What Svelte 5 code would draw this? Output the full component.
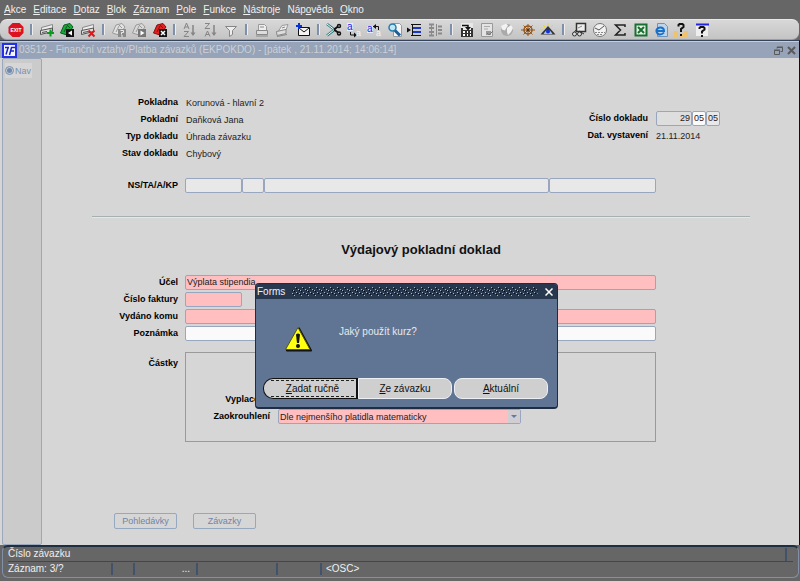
<script>
  const menu = [
    ['', 'A', 'kce'],
    ['', 'E', 'ditace'],
    ['', 'D', 'otaz'],
    ['', 'B', 'lok'],
    ['', 'Z', 'áznam'],
    ['', 'P', 'ole'],
    ['', 'F', 'unkce'],
    ['', 'N', 'ástroje'],
    ['Náp', 'o', 'věda'],
    ['', 'O', 'kno']
  ];

  const card = (c) =>
    `<path d="M2.500 5.500L13.500 2.500V6.500L2.500 9.500Z" fill="#eee" stroke="#888"/><path d="M1.500 8.500L13.500 6V9.500L1.500 12.500Z" fill="#ddd" stroke="${c}"/><path d="M3 10.500L8 9.500" stroke="#555"/>`;
  const query = (fill, edge, glyph, box) =>
    `<path d="M1.500 11L5 3L11 1.500L14 5L8 13Z" fill="${fill}" stroke="${edge}"/><path d="M5 10L8 4M8 3L11 6" stroke="${edge}" fill="none"/><path d="M7 7h8v8h-8z" fill="${box}"/>${glyph}`;

  const toolbar = [
    [['Konec', '<path d="M4.500 1h7l4 4v6l-4 4h-7l-4-4v-6z" fill="#dc1220"/><text x="8" y="10" text-anchor="middle" font-size="5" font-weight="bold" font-family="Liberation Sans, sans-serif" fill="#fff">EXIT</text>']],
    [
      ['Vložit záznam', card('#555') + '<path d="M8 11h7M11.500 7.500v7" stroke="#0a9a1e" stroke-width="2"/>'],
      ['Uložit', query('#19a83a', '#0c5c20', '<path d="M13 8.500v5l-4-2.500z" fill="#fff"/>', '#111')],
      ['Smazat záznam', card('#555') + '<path d="M8.500 8.500l6 6M14.500 8.500l-6 6" stroke="#e01818" stroke-width="2"/>']
    ],
    [
      ['Zadat dotaz', query('#e2e2e2', '#999', '<path d="M9.500 8.500h3v2h-2v2M10 14h2" stroke="#eee" fill="none"/>', '#8b8b8b')],
      ['Provést dotaz', query('#d9d9d9', '#999', '<path d="M9.500 8.500v5l4-2.500z" fill="#fff"/>', '#777')],
      ['Zrušit dotaz', query('#e02222', '#8c0c0c', '<path d="M9 9l4 4M13 9l-4 4" stroke="#fff" stroke-width="1.500"/>', '#111')]
    ],
    [
      ['Řadit vzestupně', '<path d="M2 7L4.500 1L7 7M3 5h3M2 9.500h4.500L2 14.500h5" stroke="#858585" fill="none"/><path d="M11 3v10" stroke="#858585" stroke-width="1.500"/><path d="M8.500 10.500h5L11 14z" fill="#858585"/>'],
      ['Řadit sestupně', '<path d="M2 1.500h4.500L2 6.500h5M2 14.500L4.500 9L7 14.500M3 12.500h3" stroke="#858585" fill="none"/><path d="M11 3v10" stroke="#858585" stroke-width="1.500"/><path d="M8.500 10.500h5L11 14z" fill="#858585"/>'],
      ['Filtr', '<path d="M2.500 4.500h11l-4 4v4l-3 2v-6z" fill="#eee" stroke="#858585"/>']
    ],
    [
      ['Tisk', '<path d="M4.500 8V2.500h6l2 2V8" fill="#eee" stroke="#999"/><path d="M2.500 8.500h11v4h-11z" fill="#ddd" stroke="#888"/><path d="M2 14h12M6 5h4" stroke="#888"/>'],
      ['Náhled tisku', '<path d="M4.500 9L8 3.500L14 2.500L12 8" fill="#eee" stroke="#999"/><path d="M2.500 9.500L12 7.500v4L3 13.500z" fill="#ddd" stroke="#888"/><path d="M3 14.500l10-2M8 6l3-1" stroke="#888"/>'],
      ['Odeslat poštou', '<path d="M3.500 5.500h11v8h-11z" fill="#f5f5f5" stroke="#111"/><path d="M4 6l5 4L14 6" fill="none" stroke="#111"/><path d="M1 4h6M4 1v6" stroke="#0a32d8" stroke-width="2"/>']
    ],
    [
      ['Vyjmout', '<path d="M1 2l8 6M1 13.500L9 7.500" stroke="#287c80" stroke-width="2.500"/><path d="M1 2l7 5.500M1 13.500L8 8" stroke="#e8ffff"/><path d="M8 7.500L14 3M8 7.500l6 4.500" stroke="#111" stroke-width="2"/><circle cx="13" cy="4" r="1.500" fill="#ccc" stroke="#111" stroke-width="1.500"/><circle cx="13" cy="11.500" r="1.500" fill="#ccc" stroke="#111" stroke-width="1.500"/>'],
      ['Kopírovat', '<path d="M1 1h6v8h-6z" fill="#e8ecff"/><text x="1" y="8" font-size="10" font-family="Liberation Sans, sans-serif" fill="#1428e0">a</text><path d="M4.500 10v3h4" stroke="#111" fill="none"/><path d="M8 10.500l3 2.500l-3 2.500z" fill="#111"/><text x="10" y="14" font-size="9" font-family="Liberation Sans, sans-serif" fill="#f4f4f4">a</text>'],
      ['Vložit', '<path d="M1 4h6v7h-6z" fill="#e8ecff"/><text x="1" y="10" font-size="10" font-family="Liberation Sans, sans-serif" fill="#1428e0">a</text><path d="M7 4.500h5.500V8" stroke="#111" fill="none"/><path d="M10 2L7 4.500L10 7z" fill="#111"/><text x="10" y="14" font-size="9" font-family="Liberation Sans, sans-serif" fill="#f4f4f4">a</text>'],
      ['Hledat', '<path d="M6.500 1.500h6l2 2v11h-8z" fill="#f5f5f5" stroke="#999"/><circle cx="5.500" cy="5.500" r="3.500" fill="#bfe6f5" stroke="#277ba8" stroke-width="1.500"/><path d="M8 8.500l5 5" stroke="#1c5e99" stroke-width="3"/>'],
      ['Seznam hodnot', '<path d="M4 2.500h10M4 13.500h10" stroke="#111"/><path d="M6 6h8M6 10h8" stroke="#1836c8" stroke-width="2"/><path d="M0 5.500v5l4-2.500z" fill="#111"/><path d="M5.500 2v12" stroke="#111"/>'],
      ['Strom', '<path d="M1 2.500h5M1 6h5M1 10h5M1 13.500h5M10 4.500h4M10 8h4M10 11.500h4" stroke="#8a8a8a" stroke-width="2"/><path d="M3.500 2v12M8.500 2v12" stroke="#8a8a8a"/>']
    ],
    [
      ['Kalendář', '<path d="M2 1h12v14h-12z" fill="#e8e8e8"/><path d="M2 6h2v2h8V6h2v9h-12z" fill="#333"/><path d="M4 10h2M8 10h1M11 10h1M4 13h2M8 13h1M11 13h1" stroke="#fff" stroke-width="2"/><path d="M3 3.500h6V6" stroke="#111" stroke-width="1.500" fill="none"/><path d="M6 5h6L9 8.500z" fill="#111"/>'],
      ['Dokument', '<path d="M2.500 1.500h11v13h-11z" fill="#e4e4e4" stroke="#999"/><path d="M5 4.500h6M5 7h4" stroke="#aaa"/><path d="M7 9h5v4h-5z" fill="#999"/><path d="M8 11l2 2l4-4" stroke="#777" fill="none"/>'],
      ['Internet', '<circle cx="8" cy="8" r="6" fill="#aaa"/><path d="M2 4l5-2.500l2 2l-2 3l-1 2l-3-1zM8 6l4-3l2 3l-2 4l-3 3l-1-3z" fill="#f2f2f2"/>'],
      ['Nastavení', '<circle cx="8" cy="8" r="4" fill="none" stroke="#96561a" stroke-width="1.500"/><path d="M8 2v12M1 8h14M3.500 3.500l9 9M12.500 3.500L3.500 12.500" stroke="#96561a"/><circle cx="8" cy="8" r="1.500" fill="#5c3008"/>'],
      ['Pohled', '<path d="M8 1v3M3 3l2 2M13 3l-2 2M0.500 8l2-1M15.500 8l-2-1" stroke="#e8d820"/><path d="M0.500 12.500L8 4L15.500 12.500z" fill="#333"/><path d="M3.500 12Q8 4 12.500 12z" fill="#9fc4f8"/><circle cx="8" cy="9.500" r="2" fill="#1430d8"/>']
    ],
    [
      ['Tabule', '<path d="M5.500 1.500h9v8h-9z" fill="#eee" stroke="#333" stroke-width="1.500"/><path d="M5 8L2 12M8 9l5 3" stroke="#333"/><circle cx="3.500" cy="12" r="2" fill="#ddd" stroke="#333"/><circle cx="8.500" cy="12" r="2" fill="#ddd" stroke="#333"/><path d="M7 6l4-2" stroke="#888"/>'],
      ['Hodiny', '<circle cx="8" cy="8" r="6.500" fill="#f2f2f2" stroke="#777"/><path d="M3 6l4 2l5-4" stroke="#555" fill="none"/><path d="M3 10.500h10M5 12.500h6" stroke="#888" stroke-dasharray="2 1"/>'],
      ['Součet', '<path d="M13 5V3H3.500L8.500 8L3.500 13H13V11" stroke="#222" stroke-width="1.500" fill="none"/>'],
      ['Excel', '<path d="M2.500 2.500h11v11h-11z" fill="#e8f2e8" stroke="#187030" stroke-width="2"/><path d="M5 5l6 6M11 5l-6 6" stroke="#187030" stroke-width="2"/>'],
      ['Prohlížeč', '<path d="M4.500 1.500h7l3 3v10h-10z" fill="#bed4ea" stroke="#6d93ba"/><path d="M11 10.500Q9 13 6 12.500Q3 11 3.500 8Q5 5 8 5.500Q11 6 11 9H4" stroke="#1870c8" stroke-width="2" fill="none"/>'],
      ['Kontakt', '<path d="M1 9h4v6h-4zM11 9h4v6h-4zM6 12h4v3h-4z" fill="#efc271"/><path d="M5.500 4.500V3l1-1h3l1 1v2L8 7v3M8 12v2" stroke="#111" stroke-width="2" fill="none"/>'],
      ['Nápověda', '<path d="M2 2h12v12h-12z" fill="#eee"/><path d="M2 2.500h13" stroke="#2424e0" stroke-width="2"/><path d="M5.500 7V6l1-1h3l1 1v1.500L8 9.500v2M8 13v2" stroke="#111" stroke-width="2" fill="none"/>']
    ]
  ];

  const header = [
    ['Pokladna', 'Korunová - hlavní 2'],
    ['Pokladní', 'Daňková Jana'],
    ['Typ dokladu', 'Úhrada závazku'],
    ['Stav dokladu', 'Chybový']
  ];
</script>

<div class="app">
  <nav class="menu">
    {#each menu as [before, key, after]}
      <a href="#menu">{before}<u>{key}</u>{after}</a>
    {/each}
  </nav>

  <div class="toolbar">
    <div class="tools">
      {#each toolbar as group, i}
        {#if i > 0}<span class="sep"></span>{/if}
        {#each group as [name, shape]}
          <button class="tool" aria-label={name}>
            <svg width="16" height="16" viewBox="0 0 16 16" fill="none">{@html shape}</svg>
          </button>
        {/each}
      {/each}
    </div>
  </div>

  <div class="window">
    <header class="titlebar">
      <svg class="logo" width="15" height="15" viewBox="0 0 15 15">
        <path d="M1 1h13v13H1z" fill="#f4f6ff" stroke="#2430e8" stroke-width="2" />
        <path d="M3 4.500h4M6 5L4 11.500M7.500 12L9.500 4.500H13M8.500 8h3.500" stroke="#1822c0" stroke-width="1.500" fill="none" />
      </svg>
      <span class="caption">03512 - Finanční vztahy/Platba závazků (EKPOKDO) - [pátek , 21.11.2014; 14:06:14]</span>
      <button class="win" aria-label="Obnovit">
        <svg width="9" height="9" viewBox="0 0 9 9" fill="none" stroke="#5a5a5a"><path d="M3 2.500V1.500h5.500v4H6.500M3 1h6" /><path d="M0.500 4.500h5v4h-5zM0 4h6" /></svg>
      </button>
      <button class="win" aria-label="Zavřít okno">
        <svg width="9" height="9" viewBox="0 0 9 9" stroke="#5a5a5a" stroke-width="2"><path d="M1 1l7 7M8 1L1 8" /></svg>
      </button>
    </header>

    <div class="body">
      <aside class="side">
        <button class="nav">
          <svg width="9" height="9" viewBox="0 0 9 9"><circle cx="4.500" cy="4.500" r="4" fill="#c3cad6" stroke="#7c90ae" /><circle cx="4.500" cy="4.500" r="2.500" fill="#7288a8" /></svg>
          Nav
        </button>
      </aside>

      <main class="form">
        <section class="head">
          <dl class="info">
            {#each header as [term, value]}
              <div class="line"><dt>{term}</dt><dd>{value}</dd></div>
            {/each}
          </dl>
          <div class="doc">
            <div class="line">
              <label for="number">Číslo dokladu</label>
              <div class="parts">
                <input id="number" class="grey num" value="29" />
                <input class="white two" aria-label="Řada" value="05" />
                <input class="grey two" aria-label="Rok" value="05" />
              </div>
            </div>
            <div class="line"><span class="label">Dat. vystavení</span><span class="date">21.11.2014</span></div>
          </div>
        </section>

        <div class="row codes">
          <label for="ns">NS/TA/A/KP</label>
          <div class="parts">
            <input id="ns" class="grey ns" />
            <input class="grey ta" aria-label="TA" />
            <input class="grey a" aria-label="A" />
            <input class="grey kp" aria-label="KP" />
          </div>
        </div>

        <hr />
        <h1>Výdajový pokladní doklad</h1>

        <section class="fields">
          <div class="row"><label for="purpose">Účel</label><input id="purpose" class="pink" value="Výplata stipendia" /></div>
          <div class="row"><label for="invoice">Číslo faktury</label><input id="invoice" class="pink short" /></div>
          <div class="row"><label for="payee">Vydáno komu</label><input id="payee" class="pink" /></div>
          <div class="row"><label for="note">Poznámka</label><input id="note" class="white" /></div>
        </section>

        <section class="row amounts">
          <span class="label">Částky</span>
          <div class="frame">
            <div class="sub"><label for="paid">Vyplaceno</label><input id="paid" class="pink paid" /></div>
            <div class="sub">
              <label for="round">Zaokrouhlení</label>
              <div class="pick">
                <select id="round" class="pink"><option>Dle nejmenšího platidla matematicky</option></select>
                <svg class="arrow" width="12" height="13" viewBox="0 0 12 13"><path d="M0 0h12v13H0z" fill="#d0ced2" /><path d="M3 5h6l-3 3z" fill="#5f7ba0" /></svg>
              </div>
            </div>
          </div>
        </section>

        <div class="actions">
          <button>Pohledávky</button>
          <button>Závazky</button>
        </div>
      </main>
    </div>
  </div>

  <footer class="status">
    <div class="message"><span>Číslo závazku</span></div>
    <div class="cells">
      <span class="c1">Záznam: 3/?</span><span class="c2"></span><span class="c3">...</span><span class="c4"></span><span class="c5"></span><span class="c6">&lt;OSC&gt;</span>
    </div>
  </footer>

  <div class="dialog" role="alertdialog" aria-labelledby="dlg-title" aria-describedby="dlg-text">
    <div class="dlg-bar">
      <span id="dlg-title">Forms</span>
      <svg class="grip" height="9" aria-hidden="true">
        <defs>
          <pattern id="grip" width="7" height="9" patternUnits="userSpaceOnUse">
            <path d="M3 0h1v1h-1zM6 2h1v1h-1zM1 3h1v1h-1zM4 5h1v1h-1zM0 6h1v1h-1zM2 8h1v1h-1z" fill="#a9b6c8" />
            <path d="M4 1h1v1h-1zM0 3h1v1h-1zM2 4h1v1h-1zM5 6h1v1h-1zM1 7h1v1h-1z" fill="#050b14" />
          </pattern>
        </defs>
        <rect width="100%" height="9" fill="url(#grip)" />
      </svg>
      <button class="close" aria-label="Zavřít">
        <svg width="8" height="8" viewBox="0 0 8 8" stroke="#fff" stroke-width="1.500"><path d="M0.500 0.500l7 7M7.500 0.500l-7 7" /></svg>
      </button>
    </div>
    <div class="dlg-body">
      <svg width="30" height="27" viewBox="0 0 30 27">
        <path d="M15 2.500L27 24.500H3z" fill="#111" stroke="#111" stroke-width="2" stroke-linejoin="round" />
        <path d="M14 1.500L26 23.500H1.500z" fill="#ffff10" stroke="#55550a" stroke-linejoin="round" />
        <path d="M12 8.500q2-2 4 0L15 17h-2z" fill="#111" />
        <circle cx="14" cy="20" r="2" fill="#111" />
      </svg>
      <p id="dlg-text">Jaký použít kurz?</p>
    </div>
    <div class="dlg-buttons">
      <button class="default"><span><u>Z</u>adat ručně</span></button>
      <button class="mid"><u>Z</u>e závazku</button>
      <button class="last"><u>A</u>ktuální</button>
    </div>
  </div>
</div>

<style>
  :global(body) { margin: 0; background: #666; }
  .app, .app * { box-sizing: border-box; }
  .app {
    position: relative;
    display: flex;
    flex-direction: column;
    min-height: 100vh;
    padding-bottom: 3px;
    background: #666;
    color: #111;
    font: 10px/12px "Liberation Sans", Arial, sans-serif;
  }
  button, input, select { font: inherit; color: inherit; margin: 0; padding: 0; border: 0; background: none; border-radius: 0; }
  svg { display: block; flex: none; }
  u { text-underline-offset: 1px; }

  .menu { display: flex; gap: 7px; height: 19px; padding: 4px 4px 0; }
  .menu a { color: #f0f0f0; text-decoration: none; }

  .toolbar {
    height: 21px;
    margin-right: 1px;
    padding-left: 6px;
    background: linear-gradient(#d8d8d8, #c4c4c4);
    border-top: 1px solid #e8e8e8;
    border-bottom: 1px solid #9aa0a8;
    border-radius: 7px;
  }
  .tools { display: flex; align-items: center; max-width: 706px; height: 19px; }
  .tool { flex: 2 1 0; min-width: 0; display: flex; justify-content: center; }
  .sep { flex: 1 1 0; display: flex; justify-content: center; }
  .sep::before { content: ""; width: 2px; height: 11px; background: #7f90aa; border-right: 1px solid #eee; }

  .window { flex: 1; display: flex; flex-direction: column; background: #d6d6d6; border-top: 1px solid #35445a; border-right: 1px solid #111; }
  .titlebar { display: flex; align-items: center; height: 17px; padding: 0 3px 0 2px; gap: 4px; background: #96a3b8; border-top: 1px solid #c8ced8; }
  .titlebar .logo { margin-right: -2px; }
  .caption { flex: 1; color: #ccd0d6; white-space: nowrap; }

  .body { flex: 1; display: flex; }
  .side { width: 40px; margin-left: 2px; padding: 4px 2px; background: #cbcbcb; border: 1px solid #9ba8bc; border-radius: 2px; }
  .nav { display: flex; align-items: center; gap: 1px; height: 15px; padding: 0 1px 0 0; background: #d6d6d6; color: #7d90ac; font-size: 9px; }

  .form { flex: 1; padding: 37px 49px 0 50px; font-size: 9px; line-height: 15px; }
  label, dt, .label { font-weight: bold; color: #000; text-align: right; white-space: nowrap; }
  .head { display: flex; justify-content: space-between; padding-right: 30px; }
  dl, dd { margin: 0; }
  .line { display: flex; gap: 8px; height: 17px; }
  dt { width: 86px; }
  dd, .date { padding-top: 1px; color: #222; white-space: nowrap; }
  .doc { padding-top: 16px; }
  .doc label, .doc .label { width: 68px; }
  .parts { display: flex; }
  input, select { height: 15px; min-width: 0; border: 1px solid #98a7bf; border-radius: 2px; padding: 0 1px; color: #222; }
  .grey { background: #e8e8e8; }
  .white { background: #fafafa; }
  .pink { background: #ffbec0; }
  .num { width: 36px; text-align: right; background: #dedede; }
  .two { width: 14px; }

  .row { display: grid; grid-template-columns: 86px 1fr; column-gap: 7px; margin-right: 94px; }
  .codes { margin-top: 15px; }
  .ns { width: 57px; }
  .ta { width: 22px; }
  .a { flex: 1; }
  .kp { width: 107px; }

  hr { height: 2px; margin: 23px 0 0; border: 0; background: #a6b0b2; border-bottom: 1px solid #e6e6e2; }
  h1 { margin: 24px 0 0; font-size: 13px; line-height: 16px; text-align: center; color: #111; }
  .fields { display: grid; row-gap: 2px; margin-top: 17px; }
  .short { width: 57px; }

  .amounts { margin-top: 11px; }
  .amounts > .label { padding-top: 4px; }
  .frame { display: grid; align-content: start; row-gap: 2px; height: 90px; padding: 39px 0 0; border: 1px solid #9a9a9a; }
  .sub { display: flex; gap: 8px; }
  .sub label { width: 84px; }
  .paid { width: 100px; }
  .pick { position: relative; width: 243px; }
  select { display: block; width: 100%; appearance: none; }
  .arrow { position: absolute; top: 1px; right: 1px; pointer-events: none; }

  .actions { display: flex; gap: 16px; margin: 71px 0 0 22px; }
  .actions button { width: 63px; height: 16px; border: 1px solid #96a7c0; border-radius: 2px; color: #6e85a8; }

  .status { height: 33px; margin: 0 1px 0 2px; border: 1px solid #8090a8; border-top: 2px solid #202e42; border-radius: 6px; color: #f0f0f0; }
  .message { display: flex; height: 15px; margin: 0 5px; padding: 1px 6px 0 0; border-bottom: 1px solid #38485e; }
  .message span { flex: 1; border-right: 2px solid #42526a; }
  .cells { display: flex; padding: 1px 5px 0; }
  .cells span { height: 12px; border-right: 2px solid #42526a; white-space: nowrap; }
  .c1 { width: 105px; }
  .c2 { width: 22px; }
  .c3 { width: 63px; padding-right: 6px; text-align: right; }
  .c4 { width: 80px; }
  .c5 { width: 44px; }
  .cells .c6 { padding-left: 4px; border: 0; }

  .dialog {
    position: absolute;
    top: 283px;
    left: calc(50% - 145px);
    width: 303px;
    background: #5f7593;
    border: 1px solid #1f2d42;
    border-bottom-width: 2px;
    border-radius: 4px;
    color: #f2f2f2;
  }
  .dlg-bar { display: flex; align-items: center; height: 15px; padding: 0 4px 0 1px; background: #28384f; border-radius: 3px 3px 0 0; }
  .grip { flex: 1 1 0; min-width: 0; margin: 0 7px; }
  .dlg-body { display: flex; gap: 25px; height: 79px; padding: 27px 28px 0; }
  .dlg-body p { margin: 0; color: #e6e9ee; }
  .dlg-buttons { display: flex; padding: 0 9px 8px 7px; }
  .dlg-buttons button { flex: 1 1 0; min-width: 0; height: 21px; background: #cfcfcf; border: 1px solid #eceff3; color: #111; }
  .dlg-buttons .default { border: 1px solid #111; border-right-width: 2px; border-radius: 10px 0 0 10px; }
  .default span { display: block; height: 17px; margin: 0 2px 0 7px; line-height: 16px; border: 1px dashed #222; border-width: 1px 0; }
  .dlg-buttons .mid { border-radius: 0 8px 8px 0; }
  .dlg-buttons .last { margin-left: 2px; border-radius: 8px; }
</style>
